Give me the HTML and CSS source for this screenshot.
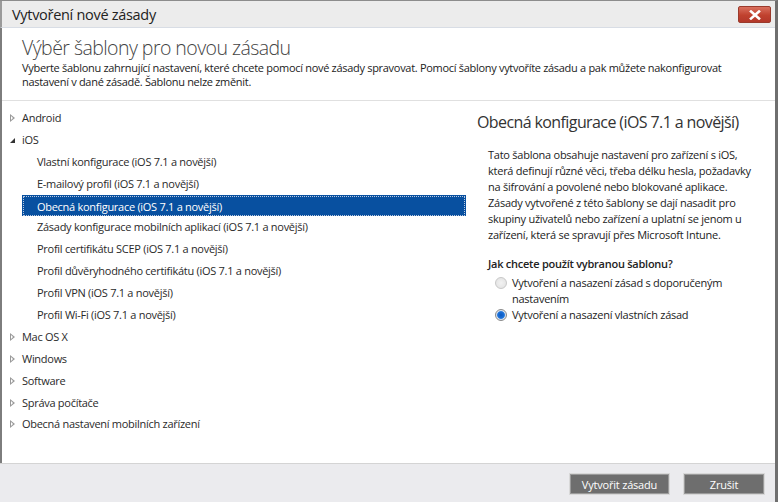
FILE: index.html
```html
<!DOCTYPE html>
<html lang="cs">
<head>
<meta charset="utf-8">
<title>Vytvoření nové zásady</title>
<link rel="stylesheet" href="styles.css">
</head>
<body>
<div class="window">
  <div class="titlebar">
    <span class="title">Vytvoření nové zásady</span>
    <button class="close" aria-label="Zavřít">
      <svg width="12" height="10" viewBox="0 0 12 10"><path d="M2 1.5 L10 8.5 M10 1.5 L2 8.5" stroke="#fff" stroke-width="2.6" stroke-linecap="square"/></svg>
    </button>
  </div>
  <div class="body">
    <div class="header">
      <h1>Výběr šablony pro novou zásadu</h1>
      <p>Vyberte šablonu zahrnující nastavení, které chcete pomocí nové zásady spravovat. Pomocí šablony vytvoříte zásadu a pak můžete nakonfigurovat nastavení v dané zásadě. Šablonu nelze změnit.</p>
    </div>
    <div class="main">
      <ul class="tree">
        <li class="node"><span class="tri closed"></span>Android</li>
        <li class="node"><span class="tri open"></span>iOS</li>
        <li class="leaf">Vlastní konfigurace (iOS 7.1 a novější)</li>
        <li class="leaf">E-mailový profil (iOS 7.1 a novější)</li>
        <li class="leaf selected"><span class="focus">Obecná konfigurace (iOS 7.1 a novější)</span></li>
        <li class="leaf">Zásady konfigurace mobilních aplikací (iOS 7.1 a novější)</li>
        <li class="leaf">Profil certifikátu SCEP (iOS 7.1 a novější)</li>
        <li class="leaf">Profil důvěryhodného certifikátu (iOS 7.1 a novější)</li>
        <li class="leaf">Profil VPN (iOS 7.1 a novější)</li>
        <li class="leaf">Profil Wi-Fi (iOS 7.1 a novější)</li>
        <li class="node"><span class="tri closed"></span>Mac OS X</li>
        <li class="node"><span class="tri closed"></span>Windows</li>
        <li class="node"><span class="tri closed"></span>Software</li>
        <li class="node"><span class="tri closed"></span>Správa počítače</li>
        <li class="node"><span class="tri closed"></span>Obecná nastavení mobilních zařízení</li>
      </ul>
      <div class="details">
        <h2>Obecná konfigurace (iOS 7.1 a novější)</h2>
        <p class="desc">Tato šablona obsahuje nastavení pro zařízení s iOS, která definují různé věci, třeba délku hesla, požadavky na šifrování a povolené nebo blokované aplikace. Zásady vytvořené z této šablony se dají nasadit pro skupiny uživatelů nebo zařízení a uplatní se jenom u zařízení, která se spravují přes Microsoft Intune.</p>
        <div class="question">Jak chcete použít vybranou šablonu?</div>
        <label class="radio disabled"><span class="dot"></span><span>Vytvoření a nasazení zásad s doporučeným nastavením</span></label>
        <label class="radio checked"><span class="dot"></span><span>Vytvoření a nasazení vlastních zásad</span></label>
      </div>
    </div>
  </div>
  <div class="footer">
    <button class="btn btn-create">Vytvořit zásadu</button>
    <button class="btn btn-cancel">Zrušit</button>
  </div>
</div>
</body>
</html>
```
FILE: styles.css
```css
* { box-sizing: border-box; }
html, body { margin: 0; padding: 0; }
body {
  width: 778px;
  height: 502px;
  overflow: hidden;
  background: #fff;
  font-family: "Open Sans", "Noto Sans", sans-serif;
  color: #222;
}
.window {
  width: 778px;
  height: 502px;
  display: flex;
  flex-direction: column;
  border-top: 1px solid #8c8c8c;
  border-right: 3px solid #6f6f6f;
}
.titlebar {
  height: 27px;
  flex: none;
  background: #ececec;
  border-left: 2px solid #9a9a9a;
  border-bottom: 1px solid #d8dde5;
  display: flex;
  align-items: center;
  justify-content: space-between;
  padding: 0 4px 0 10px;
}
.title {
  font-size: 14.5px;
  color: #222;
  letter-spacing: -0.3px;
}
.close {
  width: 33px;
  height: 17px;
  margin-top: 1px;
  border: 1px solid #9a3a2c;
  border-radius: 2px;
  background: linear-gradient(#d9705e, #c0412e 55%, #b3382a);
  display: flex;
  align-items: center;
  justify-content: center;
  padding: 0;
}
.body {
  flex: 1;
  display: flex;
  flex-direction: column;
  border-left: 2px solid #7d7d7d;
  min-height: 0;
}
.header {
  height: 73px;
  flex: none;
  padding: 7px 20px 0 20px;
  border-bottom: 1px solid #e0e0e0;
}
.header h1 {
  margin: 0;
  font-size: 19.5px;
  font-weight: 300;
  color: #444;
  line-height: 26px;
  letter-spacing: -0.55px;
}
.header p {
  margin: 0;
  font-size: 11px;
  line-height: 14px;
  color: #222;
  letter-spacing: -0.3px;
}
.main {
  flex: 1;
  display: flex;
  min-height: 0;
}
.tree {
  list-style: none;
  margin: 0;
  padding: 6px 0 0 0;
  width: 464px;
  flex: none;
}
.tree li {
  height: 21.9px;
  line-height: 22px;
  font-size: 11px;
  color: #2a2a2a;
  white-space: nowrap;
  letter-spacing: -0.28px;
}
.node {
  display: flex;
  align-items: center;
  padding-left: 7px;
}
.tri {
  width: 13px;
  height: 22px;
  position: relative;
  flex: none;
}
.tri.closed::before {
  content: "";
  position: absolute;
  left: 1px;
  top: 7px;
  border-left: 5px solid #9a9a9a;
  border-top: 4px solid transparent;
  border-bottom: 4px solid transparent;
}
.tri.closed::after {
  content: "";
  position: absolute;
  left: 2px;
  top: 9px;
  border-left: 2px solid #fff;
  border-top: 2px solid transparent;
  border-bottom: 2px solid transparent;
}
.tri.open::before {
  content: "";
  position: absolute;
  left: 1px;
  top: 9px;
  border-right: 5px solid #333;
  border-top: 5px solid transparent;
}
.leaf {
  padding-left: 35px;
}
.leaf.selected {
  margin-left: 20px;
  padding: 1px;
  background: #0850a0;
  color: #fff;
}
.focus {
  display: block;
  height: 20px;
  line-height: 20px;
  padding-left: 13px;
  border: 1px dotted #b8c8e0;
}
.details {
  flex: 1;
  padding: 9px 12px 0 11px;
}
.details h2 {
  margin: 0 0 13px 0;
  font-size: 16px;
  font-weight: 400;
  color: #333;
  line-height: 24px;
  letter-spacing: -0.6px;
}
.desc {
  margin: 0 0 12px 11px;
  font-size: 11px;
  line-height: 16.1px;
  color: #222;
  letter-spacing: -0.25px;
}
.question {
  margin: 0 0 3px 11px;
  font-size: 11px;
  font-weight: 600;
  line-height: 16px;
  color: #222;
  letter-spacing: -0.25px;
}
.radio {
  display: flex;
  margin-left: 18px;
  font-size: 11px;
  line-height: 16px;
  color: #222;
  letter-spacing: -0.25px;
}
.dot {
  width: 12px;
  height: 12px;
  flex: none;
  border-radius: 50%;
  margin: 2px 5px 0 0;
  border: 1px solid #c8c8c8;
  background: radial-gradient(circle, #f2f2f2 0, #e0e0e0 100%);
}
.radio.checked .dot {
  border-color: #8a8a8a;
  background: radial-gradient(circle, #0a58c0 0, #1c6fd6 3px, #3a86e0 3.6px, #d4e0ee 4.2px, #ececec 100%);
}
.footer {
  height: 39px;
  flex: none;
  background: #ebebee;
  border-top: 1px solid #d4d4d4;
  display: flex;
  justify-content: flex-end;
  align-items: flex-start;
  gap: 13px;
  padding: 9px 10px 0 0;
}
.btn {
  height: 22px;
  background: #6e6e6e;
  color: #fff;
  border: 1px solid #d8d8d8;
  outline: 1px solid #9a9a9a;
  outline-offset: -2px;
  font-family: "Open Sans", "Noto Sans", sans-serif;
  font-size: 11px;
  padding: 0;
  letter-spacing: -0.2px;
}
.btn-create { width: 101px; }
.btn-cancel { width: 82px; }
```
